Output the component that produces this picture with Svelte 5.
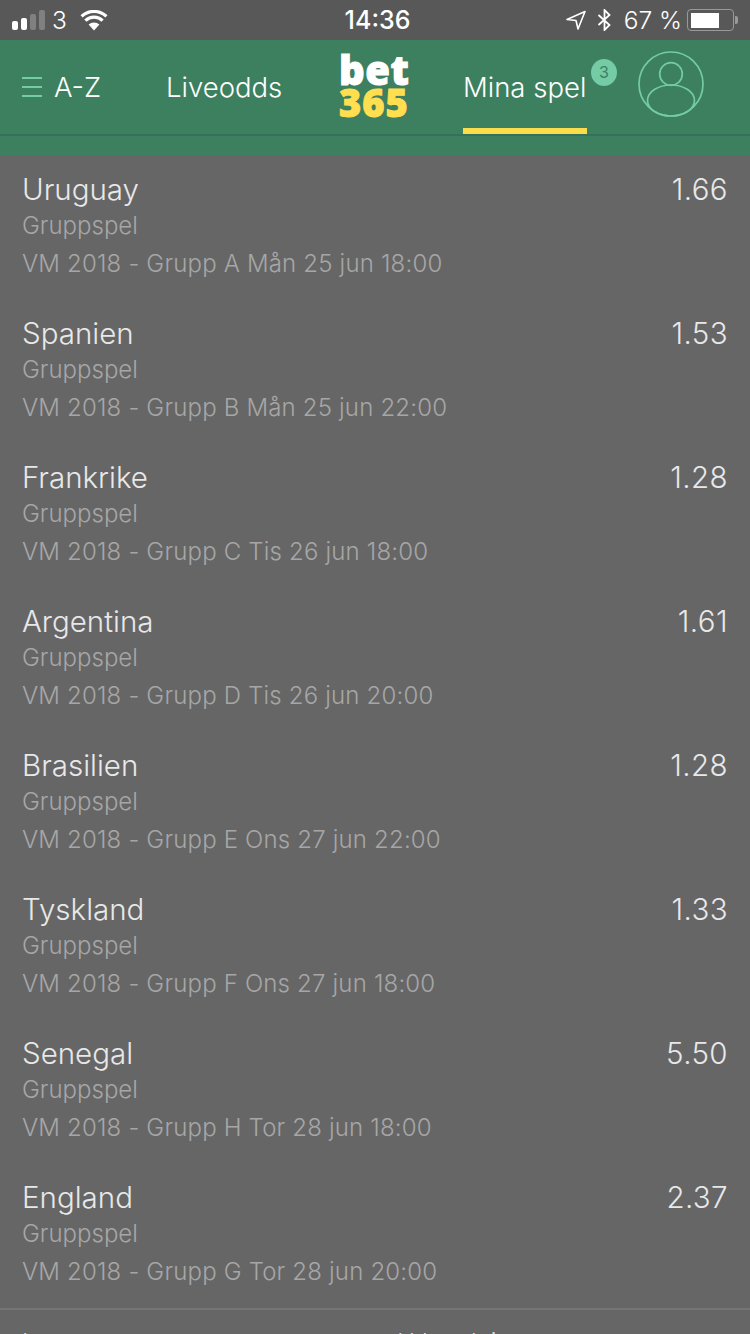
<script>
  const bets = [
    { team: 'Uruguay', odds: '1.66', info: 'VM 2018 - Grupp A Mån 25 jun 18:00' },
    { team: 'Spanien', odds: '1.53', info: 'VM 2018 - Grupp B Mån 25 jun 22:00' },
    { team: 'Frankrike', odds: '1.28', info: 'VM 2018 - Grupp C Tis 26 jun 18:00' },
    { team: 'Argentina', odds: '1.61', info: 'VM 2018 - Grupp D Tis 26 jun 20:00' },
    { team: 'Brasilien', odds: '1.28', info: 'VM 2018 - Grupp E Ons 27 jun 22:00' },
    { team: 'Tyskland', odds: '1.33', info: 'VM 2018 - Grupp F Ons 27 jun 18:00' },
    { team: 'Senegal', odds: '5.50', info: 'VM 2018 - Grupp H Tor 28 jun 18:00' },
    { team: 'England', odds: '2.37', info: 'VM 2018 - Grupp G Tor 28 jun 20:00' }
  ]
</script>

<div class="phone">
  <div class="status">
    <div class="status-left">
      <div class="signal">
        <i class="on h1"></i><i class="on h2"></i><i class="h3"></i><i class="h4"></i>
      </div>
      <span class="carrier">3</span>
      <svg class="wifi" viewBox="0 0 28 21" width="28" height="21">
        <path d="M14 20.5 L8.6 14.6 A8 8 0 0 1 19.4 14.6 Z" fill="#fff" />
        <path d="M5.4 10.6 A12.4 12.4 0 0 1 22.6 10.6" fill="none" stroke="#fff" stroke-width="3.2" />
        <path d="M1.6 6.4 A18 18 0 0 1 26.4 6.4" fill="none" stroke="#fff" stroke-width="3.2" />
      </svg>
    </div>
    <div class="clock">14:36</div>
    <div class="status-right">
      <svg class="loc" viewBox="0 0 20 20" width="20" height="20">
        <path d="M1 9.5 L19 1.5 L12 19 L10 10.5 Z" fill="none" stroke="#fff" stroke-width="1.6" stroke-linejoin="round" />
      </svg>
      <svg class="bt" viewBox="0 0 15 22" width="15" height="22">
        <path d="M1.5 6 L12.5 16 L7.5 21 V1 L12.5 6 L1.5 16" fill="none" stroke="#fff" stroke-width="1.8" />
      </svg>
      <span class="pct">67 %</span>
      <div class="battery"><div class="level"></div></div>
      <div class="nub"></div>
    </div>
  </div>

  <header>
    <nav>
      <div class="az">
        <span class="burger"><i></i><i></i><i></i></span>
        <span>A-Z</span>
      </div>
      <div class="live">Liveodds</div>
      <div class="logo"><span class="bet">bet</span><span class="n365">365</span></div>
      <div class="mine">
        <span>Mina spel</span>
        <b class="badge">3</b>
      </div>
      <svg class="user" viewBox="0 0 66 66" width="66" height="66">
        <g fill="none" stroke="#74cba5" stroke-width="1.7">
          <circle cx="33" cy="33" r="32" />
          <circle cx="33" cy="23" r="11.3" />
          <ellipse cx="33" cy="49.5" rx="23.5" ry="15.5" />
        </g>
      </svg>
    </nav>
  </header>

  <main>
    {#each bets as b}
      <div class="bet-row">
        <div class="top"><span>{b.team}</span><span class="odds">{b.odds}</span></div>
        <div class="kind">Gruppspel</div>
        <div class="info">{b.info}</div>
      </div>
    {/each}
    <div class="footer"><span>Insats</span><span class="payout">Utbetalning</span></div>
  </main>
</div>

<style>
  :global(body) {
    margin: 0;
    background: #666;
  }

  .phone {
    width: 750px;
    height: 1334px;
    overflow: hidden;
    background: #666;
    color: #fff;
    font-family: Inter, 'Liberation Sans', sans-serif;
  }

  .status {
    height: 40px;
    background: #585858;
    display: grid;
    grid-template-columns: 1fr auto 1fr;
    align-items: center;
    padding: 0 12px;
    box-sizing: border-box;
    font-size: 24.5px;
    font-weight: 300;
  }

  .status-left {
    display: flex;
    align-items: center;
  }

  .signal {
    display: flex;
    align-items: flex-end;
    gap: 3px;
    height: 20px;
    margin-right: 7px;
  }

  .signal i {
    width: 6px;
    border-radius: 2px;
    background: #808080;
  }

  .signal .on {
    background: #fff;
  }

  .h1 { height: 9px; }
  .h2 { height: 12px; }
  .h3 { height: 16px; }
  .h4 { height: 20px; }

  .wifi {
    margin-left: 13px;
  }

  .clock {
    font-size: 25px;
    font-weight: 500;
    margin-left: 5px;
  }

  .status-right {
    display: flex;
    align-items: center;
    justify-content: flex-end;
  }

  .bt {
    margin-left: 11px;
  }

  .pct {
    margin-left: 12px;
  }

  .battery {
    margin-left: 5px;
    width: 47px;
    height: 22px;
    box-sizing: border-box;
    border: 1.5px solid #999;
    border-radius: 4px;
    padding: 2.5px;
  }

  .level {
    width: 28px;
    height: 100%;
    background: #fff;
  }

  .nub {
    width: 3px;
    height: 8px;
    background: #999;
    margin-left: 1px;
    border-radius: 0 2px 2px 0;
  }

  header {
    height: 115px;
    background: #3d8060;
  }

  nav {
    height: 94px;
    border-bottom: 2px solid #35705a;
    display: flex;
    align-items: center;
    padding-left: 22px;
    font-size: 27.5px;
    font-weight: 300;
  }

  .az {
    display: flex;
    align-items: center;
    gap: 12px;
    width: 144px;
  }

  .burger {
    display: flex;
    flex-direction: column;
    gap: 7px;
  }

  .burger i {
    display: block;
    width: 20px;
    height: 2px;
    background: #74cba5;
  }

  .live {
    width: 173px;
  }

  .logo {
    width: 124px;
    display: flex;
    flex-direction: column;
    font-family: 'Open Sans', sans-serif;
    font-weight: 800;
    margin-top: -4px;
    -webkit-text-stroke: 1px currentColor;
  }

  .bet {
    font-size: 40px;
    line-height: 34px;
    letter-spacing: 0.5px;
    color: #fff;
  }

  .n365 {
    font-size: 38px;
    line-height: 30px;
    letter-spacing: 1px;
    color: #ffdf4f;
  }

  .mine {
    width: 175px;
    height: 94px;
    display: flex;
    align-items: center;
    position: relative;
  }

  .mine::after {
    content: '';
    position: absolute;
    left: 0;
    bottom: 0;
    width: 124px;
    height: 6px;
    background: #fbdd4c;
  }

  .badge {
    position: absolute;
    left: 128px;
    top: 19px;
    width: 26px;
    height: 27px;
    border-radius: 50%;
    background: #74cba5;
    color: #3d8060;
    font-size: 16px;
    font-weight: 400;
    text-align: center;
    line-height: 27px;
  }

  .user {
    margin-top: -6px;
  }

  .bet-row {
    height: 144px;
    box-sizing: border-box;
    padding: 14px 22px 0;
  }

  .top {
    display: flex;
    justify-content: space-between;
    font-size: 29.5px;
    line-height: 40px;
    font-weight: 300;
    color: #e8e8e8;
  }

  .odds {
    letter-spacing: 0.4px;
  }

  .kind {
    font-size: 24px;
    line-height: 30px;
    font-weight: 300;
    color: #a6a6a6;
    margin-top: 2px;
  }

  .info {
    font-size: 24px;
    line-height: 30px;
    font-weight: 300;
    letter-spacing: 0.18px;
    color: #a6a6a6;
    margin-top: 8px;
  }

  .footer {
    border-top: 2px solid #757575;
    margin-top: 1px;
    padding: 18px 22px 0;
    font-size: 24px;
    color: #ddd;
    font-weight: 300;
    display: flex;
  }

  .payout {
    margin-left: 310px;
  }
</style>
